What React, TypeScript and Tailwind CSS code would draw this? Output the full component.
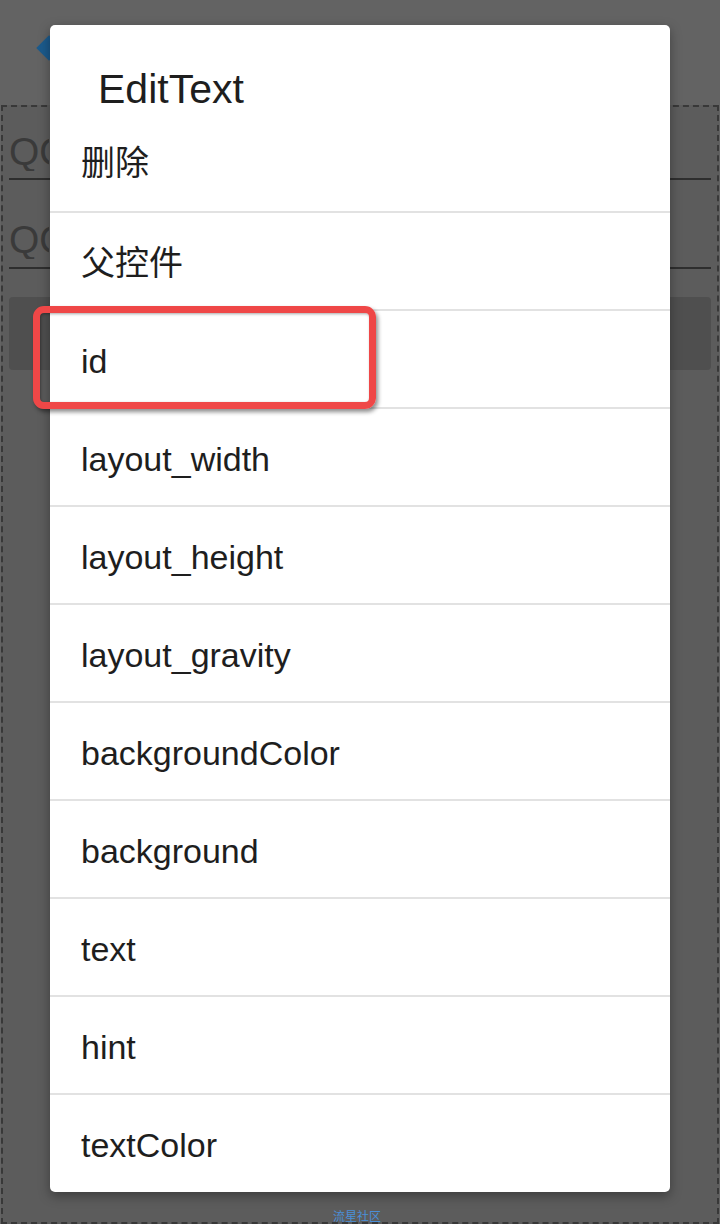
import React from "react";

const items = [
  "删除",
  "父控件",
  "id",
  "layout_width",
  "layout_height",
  "layout_gravity",
  "backgroundColor",
  "background",
  "text",
  "hint",
  "textColor",
];

export default function App() {
  return (
    <div
      className="relative w-[720px] h-[1224px] overflow-hidden bg-[#636363] flex flex-col"
      style={{ fontFamily: '"Liberation Sans", Arial, "Noto Sans CJK SC", sans-serif' }}
    >
      {/* top bar */}
      <div className="h-[105px] shrink-0 flex items-start pl-[40px] pt-[39px]">
        <div className="w-[18px] h-[18px] bg-[#1b5a8c] rotate-45" />
      </div>
      {/* content area */}
      <div className="flex-1 mx-[1px] border-2 border-dashed border-[#383838] bg-[#5c5c5c] px-[6px] flex flex-col">
        <div className="h-[73px] pt-[25px] border-b-2 border-[#2e2e2e] text-[39px] leading-[39px] text-[#3a3a3a]">
          <div className="w-[40px] overflow-hidden whitespace-nowrap">QQ</div>
        </div>
        <div className="h-[89px] pt-[40px] border-b-2 border-[#2e2e2e] text-[39px] leading-[39px] text-[#3a3a3a]">
          <div className="w-[40px] overflow-hidden whitespace-nowrap">QQ</div>
        </div>
        <div className="mt-[28px] h-[73px] rounded-[4px] bg-[#4f4f4f]" />
      </div>

      {/* dialog */}
      <div className="absolute left-[50px] top-[25px] w-[620px] h-[1167px] bg-white rounded-[5px] shadow-[0_4px_12px_rgba(0,0,0,0.35)] flex flex-col overflow-hidden">
        <div className="h-[88px] shrink-0 pt-[44px] pl-[48px] text-[41px] leading-[41px] text-[#1e1e1e]">
          EditText
        </div>
        {items.map((t, i) => (
          <div
            key={t}
            className={
              i === 0
                ? "h-[100px] shrink-0 pt-[33px] pl-[31px] text-[34px] leading-[34px] text-[#1e1e1e] border-b-2 border-[#e2e2e2]"
                : i < items.length - 1
                ? "h-[98px] shrink-0 pt-[33px] pl-[31px] text-[34px] leading-[34px] text-[#1e1e1e] border-b-2 border-[#e2e2e2]"
                : "h-[96px] shrink-0 pt-[33px] pl-[31px] text-[34px] leading-[34px] text-[#1e1e1e]"
            }
          >
            {t}
          </div>
        ))}
      </div>

      {/* red annotation box */}
      <div className="absolute left-[33px] top-[306px] w-[343px] h-[103px] rounded-[11px] border-[7px] border-[#ef4747] shadow-[2px_3px_4px_rgba(0,0,0,0.45),inset_1px_1px_3px_rgba(0,0,0,0.35)]" />

      {/* watermark */}
      <div
        className="absolute left-[333px] top-[1209px] text-[12px] leading-[14px] text-[#4a8fd8]"
        style={{ fontFamily: '"Noto Sans CJK SC", sans-serif' }}
      >
        流星社区
      </div>
    </div>
  );
}
